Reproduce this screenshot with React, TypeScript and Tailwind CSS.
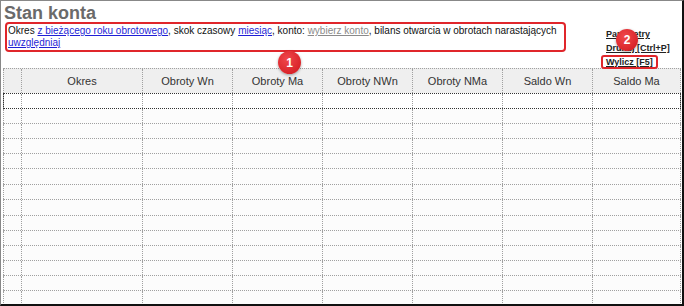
import React from "react";

const cols = ["", "Okres", "Obroty Wn", "Obroty Ma", "Obroty NWn", "Obroty NMa", "Saldo Wn", "Saldo Ma"];
const widths = ["w-[18px]", "w-[121px]", "w-[90px]", "w-[90px]", "w-[90px]", "w-[90px]", "w-[90px]", "w-[89px]"];
const rowHeights = ["h-[15px]", "h-[15px]", "h-[15px]", "h-[15px]", "h-[16px]", "h-[15px]", "h-[16px]", "h-[15px]", "h-[15px]", "h-[15px]", "h-[15px]", "h-[15px]", "h-[15px]"];

function Badge({ n, className }: { n: string; className: string }) {
  return (
    <div
      className={
        "absolute rounded-full bg-[radial-gradient(circle_at_40%_35%,#f0474b,#d0161c)] shadow-[0_1px_3px_rgba(0,0,0,0.35)] flex items-center justify-center text-white font-bold " +
        className
      }
    >
      {n}
    </div>
  );
}

function Cell({ i, children, last }: { i: number; children?: React.ReactNode; last?: boolean }) {
  return (
    <div
      className={
        widths[i] +
        " shrink-0 h-full border-l border-dotted border-[#a0a0a0] flex items-center justify-center " +
        (last ? "border-r" : "")
      }
    >
      {children}
    </div>
  );
}

export default function App() {
  return (
    <div className="w-[684px] h-[306px] bg-white relative overflow-hidden border-t border-l border-t-[#888] border-l-[#888] border-r-2 border-b-2 border-r-[#111] border-b-[#111] font-['Liberation_Sans',Arial,sans-serif]">
      <div className="flex h-[51px] items-start">
        <div className="w-[565px] shrink-0">
          <div className="pt-[4px] pl-[3px] h-[21px] text-[18px] leading-[17px] font-bold text-[#6a6a6a]">Stan konta</div>
          <div className="ml-[4px] w-[561px] h-[30px] border-2 border-[#e0262b] rounded-[4px] px-[1px] py-[1px] text-[10px] leading-[12px] text-[#111] whitespace-nowrap">
            Okres <span className="text-[#1f1fd6] underline">z bieżącego roku obrotowego</span>, skok czasowy{" "}
            <span className="text-[#1f1fd6] underline">miesiąc</span>, konto:{" "}
            <span className="text-[#8a8a8a] underline">wybierz konto</span>, bilans otwarcia w obrotach narastających
            <br />
            <span className="text-[#1f1fd6] underline">uwzględniaj</span>
          </div>
        </div>
        <div className="ml-[40px] mt-[26px] flex flex-col text-[9px] leading-[14px] font-bold text-[#222] whitespace-nowrap">
          <span className="underline">Parametry</span>
          <span className="underline">Drukuj [Ctrl+P]</span>
          <span className="relative self-start underline">
            Wylicz [F5]
            <span className="absolute -left-[5px] -right-[5px] top-0 bottom-0 border-2 border-[#e0262b] rounded-[3px]" />
          </span>
        </div>
      </div>

      <div className="mt-[16px] ml-[2px] w-[678px] text-[11px] text-[#333]">
        <div className="flex h-[25px] bg-[#efefef] border-t border-dotted border-[#a0a0a0]">
          {cols.map((c, i) => (
            <Cell key={i} i={i} last={i === cols.length - 1}>
              {c}
            </Cell>
          ))}
        </div>
        <div className="flex h-[16px] bg-white border-y border-dotted border-[#333] relative">
          {cols.map((_, i) => (
            <Cell key={i} i={i} last={i === cols.length - 1} />
          ))}
          <div className="absolute inset-y-[-1px] left-0 right-0 border-x border-dotted border-[#333]" />
        </div>
        {rowHeights.map((h, r) => (
          <div key={r} className={"flex bg-[#fcfcfc] border-b border-dotted border-[#a0a0a0] " + h}>
            {cols.map((_, i) => (
              <Cell key={i} i={i} last={i === cols.length - 1} />
            ))}
          </div>
        ))}
      </div>

      <Badge n="1" className="left-[277px] top-[50px] w-[23px] h-[23px] text-[12px]" />
      <Badge n="2" className="left-[615px] top-[28px] w-[22px] h-[22px] text-[12px]" />
    </div>
  );
}
